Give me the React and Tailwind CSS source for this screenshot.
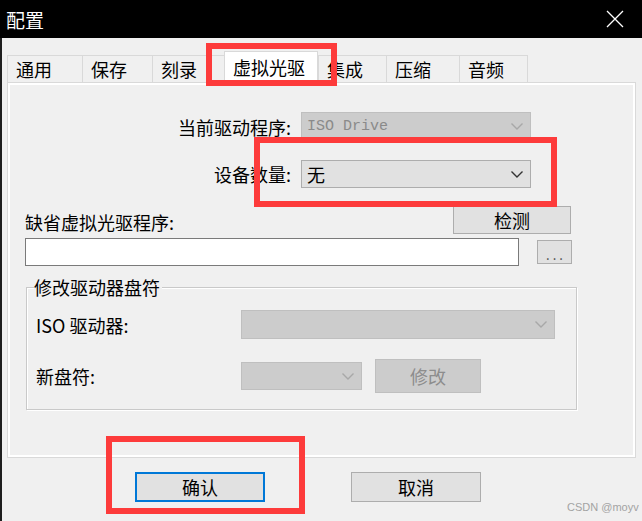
import React from 'react';

function Chevron({ color }) {
    return (
        <svg width="12" height="7" viewBox="0 0 12 7" fill="none">
            <path d="M0.5 0.5L6 6L11.5 0.5" stroke={color} strokeWidth="1.4" />
        </svg>
    );
}

const tabs = [
    { label: '通用', w: 'w-[75px]' },
    { label: '保存', w: 'w-[70px]' },
    { label: '刻录', w: 'w-[72px]' },
    { label: '虚拟光驱', w: 'w-[94px]', active: true },
    { label: '集成', w: 'w-[68px]' },
    { label: '压缩', w: 'w-[73px]' },
    { label: '音频', w: 'w-[69px]', last: true },
];

function Tabs() {
    return (
        <div className="flex items-end ml-[5px] mt-[13px] h-[31px]">
            {tabs.map((t) =>
                t.active ? (
                    <div
                        key={t.label}
                        className={`${t.w} h-[32px] -mb-[1px] relative z-10 bg-white border-t border-l border-r border-[#d9d9d9] pl-[8px] pt-[5px] leading-[20px]`}
                    >
                        {t.label}
                    </div>
                ) : (
                    <div
                        key={t.label}
                        className={`${t.w} h-[27px] bg-[#f0f0f0] border-t border-l border-[#d9d9d9] ${t.last ? 'border-r' : ''} pl-[8px] pt-[3px] leading-[20px]`}
                    >
                        {t.label}
                    </div>
                )
            )}
        </div>
    );
}

export default function App() {
    return (
        <div className="w-[642px] h-[521px] bg-[#f0f0f0] relative overflow-hidden text-[18px] text-black font-['Noto_Sans_CJK_SC','Noto_Sans',sans-serif]">
            {/* title bar */}
            <div className="h-[38px] bg-black flex items-center justify-between pl-[6px] pr-[18px]">
                <span className="text-white text-[19px] leading-none">配置</span>
                <svg width="18" height="18" viewBox="0 0 18 18">
                    <path d="M1 1L17 17M17 1L1 17" stroke="#fff" strokeWidth="1.3" />
                </svg>
            </div>

            <div className="h-[483px] border-l-2 border-[#1e1e1e] flex flex-col">
                <Tabs />

                {/* tab page */}
                <div className="ml-[5px] w-[629px] h-[376px] border border-[#d9d9d9]">
                    <div className="h-full border-2 border-white flex flex-col">
                        <div className="flex items-center mt-[27px] h-[29px]">
                            <div className="w-[281px] text-right leading-none">当前驱动程序:</div>
                            <div className="ml-[10px] w-[230px] h-[29px] bg-[#cccccc] border border-[#bfbfbf] flex items-center justify-between pl-[5px] pr-[7px]">
                                <span className="font-['Liberation_Mono',monospace] text-[15px] text-[#8a8a8a] leading-none">ISO Drive</span>
                                <Chevron color="#a8a8a8" />
                            </div>
                        </div>

                        <div className="flex items-center mt-[19px] h-[28px]">
                            <div className="w-[281px] text-right leading-none">设备数量:</div>
                            <div className="ml-[10px] w-[230px] h-[28px] bg-[#e1e1e1] border border-[#adadad] flex items-center justify-between pl-[5px] pr-[7px]">
                                <span className="leading-none">无</span>
                                <Chevron color="#333333" />
                            </div>
                        </div>

                        <div className="flex items-center mt-[18px] h-[28px] pl-[15px]">
                            <div className="w-[428px] leading-none pt-[3px]">缺省虚拟光驱程序:</div>
                            <button className="w-[118px] h-[28px] bg-[#e1e1e1] border border-[#adadad] leading-none">检测</button>
                        </div>

                        <div className="flex items-center mt-[4px] pl-[15px]">
                            <div className="w-[494px] h-[28px] bg-white border border-[#7a7a7a]" />
                            <button className="ml-[18px] w-[35px] h-[24px] bg-[#e1e1e1] border border-[#adadad] text-[13px] text-[#444] leading-none tracking-[3px] pl-[3px] pt-[4px]">...</button>
                        </div>

                        {/* group box */}
                        <div className="relative mt-[21px] ml-[16px] w-[551px] h-[123px] border border-[#c9c9c9] shadow-[inset_1px_1px_0_#ffffff,1px_1px_0_#ffffff]">
                            <span className="absolute -top-[11px] left-[7px] bg-[#f0f0f0] pr-[2px] leading-[20px]">修改驱动器盘符</span>

                            <div className="flex items-center mt-[22px] pl-[9px]">
                                <div className="w-[205px] leading-none">ISO 驱动器:</div>
                                <div className="w-[314px] h-[29px] bg-[#cccccc] border border-[#bfbfbf] flex items-center justify-end pr-[7px]">
                                    <Chevron color="#a8a8a8" />
                                </div>
                            </div>

                            <div className="flex items-center mt-[20px] h-[34px] pl-[9px]">
                                <div className="w-[205px] leading-none">新盘符:</div>
                                <div className="w-[121px] h-[28px] bg-[#cccccc] border border-[#bfbfbf] flex items-center justify-end pr-[7px]">
                                    <Chevron color="#a8a8a8" />
                                </div>
                                <button className="ml-[13px] w-[106px] h-[34px] bg-[#cccccc] border border-[#bfbfbf] text-[#8d8d8d] leading-none">修改</button>
                            </div>
                        </div>
                    </div>
                </div>

                {/* dialog buttons */}
                <div className="flex mt-[14px]">
                    <button className="ml-[133px] w-[130px] h-[30px] bg-[#e1e1e1] border-2 border-[#0078d7] leading-none">确认</button>
                    <button className="ml-[86px] w-[130px] h-[30px] bg-[#e1e1e1] border border-[#adadad] leading-none">取消</button>
                </div>
            </div>

            {/* watermark */}
            <span className="absolute left-[567px] top-[499px] text-[11px] text-[#a3a3a3] font-['Liberation_Sans',sans-serif]">CSDN @moyv</span>

            {/* red annotation boxes */}
            <div className="absolute left-[206px] top-[43px] w-[131px] h-[43px] border-[6px] border-[#fd3b3b] z-20" />
            <div className="absolute left-[254px] top-[137px] w-[303px] h-[70px] border-[6px] border-[#fd3b3b] z-20" />
            <div className="absolute left-[106px] top-[436px] w-[199px] h-[78px] border-[6px] border-[#fd3b3b] z-20" />
        </div>
    );
}
